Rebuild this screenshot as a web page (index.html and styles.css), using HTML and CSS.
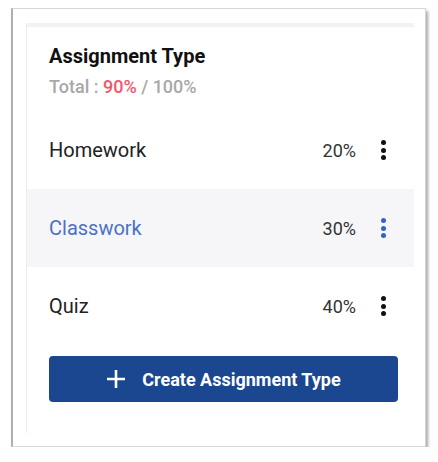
FILE: index.html
```html
<!DOCTYPE html>
<html lang="en">
<head>
  <meta charset="UTF-8" />
  <meta name="viewport" content="width=device-width, initial-scale=1.0"/>
  <title>Assignment Type</title>
  <link rel="stylesheet" href="styles.css">
</head>
<body>

  <div class="frame">
    <div class="card">
      <h2>Assignment Type</h2>
      <p class="total">Total : <span class="used">90%</span> / 100%</p>

      <!-- Type list -->
      <div class="row">
        <span class="name">Homework</span>
        <span class="pct">20%</span>
        <span class="kebab"><i></i><i></i><i></i></span>
      </div>
      <div class="row active">
        <span class="name">Classwork</span>
        <span class="pct">30%</span>
        <span class="kebab"><i></i><i></i><i></i></span>
      </div>
      <div class="row">
        <span class="name">Quiz</span>
        <span class="pct">40%</span>
        <span class="kebab"><i></i><i></i><i></i></span>
      </div>

      <button class="create">
        <svg width="20" height="20" viewBox="0 0 20 20"><path d="M10 1v18M1 10h18" stroke="#fff" stroke-width="2.6" fill="none"/></svg>
        Create Assignment Type
      </button>
    </div>
  </div>

</body>
</html>
```

FILE: styles.css
```css
* {
  margin: 0;
  padding: 0;
  box-sizing: border-box;
  font-family: Roboto, 'Noto Sans', sans-serif;
}

body {
  background: #fff;
  color: #222;
}

/* Outer window */
.frame {
  margin: 8px 0 0 11px;
  width: 415px;
  height: 439px;
  border: 1px solid #d6d6d6;
  border-left: 2px solid #b0b0b0;
  box-shadow: 2px 3px 3px rgba(0,0,0,0.35);
  padding: 14px 11px 13px 13px;
  background: #fff;
}

.card {
  height: 100%;
  border-top: 4px solid #f2f2f6;
  border-left: 1px solid #ececf0;
  padding-top: 17px;
}

h2 {
  font-size: 20px;
  font-weight: 700;
  line-height: 24px;
  color: #111;
  padding-left: 22px;
}

.total {
  margin-top: 8px;
  padding-left: 22px;
  font-size: 18px;
  font-weight: 500;
  line-height: 22px;
  color: #a8a8a8;
}

.used {
  color: #f4566a;
}

/* Rows */
.row {
  height: 78px;
  display: flex;
  align-items: center;
  padding: 0 26px 0 22px;
}

.total + .row {
  margin-top: 13px;
}

.row .name {
  flex: 1;
  font-size: 20px;
  color: #222;
}

.row .pct {
  font-size: 18px;
  color: #333;
}

.kebab {
  width: 10px;
  margin-left: 22px;
  display: flex;
  flex-direction: column;
  align-items: center;
  gap: 2.5px;
}

.kebab i {
  width: 5px;
  height: 5px;
  border-radius: 50%;
  background: #111;
}

.row.active {
  background: #f6f6f9;
}

.row.active .name {
  color: #4a72c4;
}

.row.active .kebab i {
  background: #3264c8;
}

/* Button */
.create {
  margin: 11px 0 0 22px;
  width: 349px;
  height: 46px;
  border: none;
  border-radius: 4px;
  background: #1b4791;
  color: #fff;
  font-size: 18px;
  font-weight: 700;
  display: flex;
  align-items: center;
  justify-content: center;
  gap: 16px;
}
```
